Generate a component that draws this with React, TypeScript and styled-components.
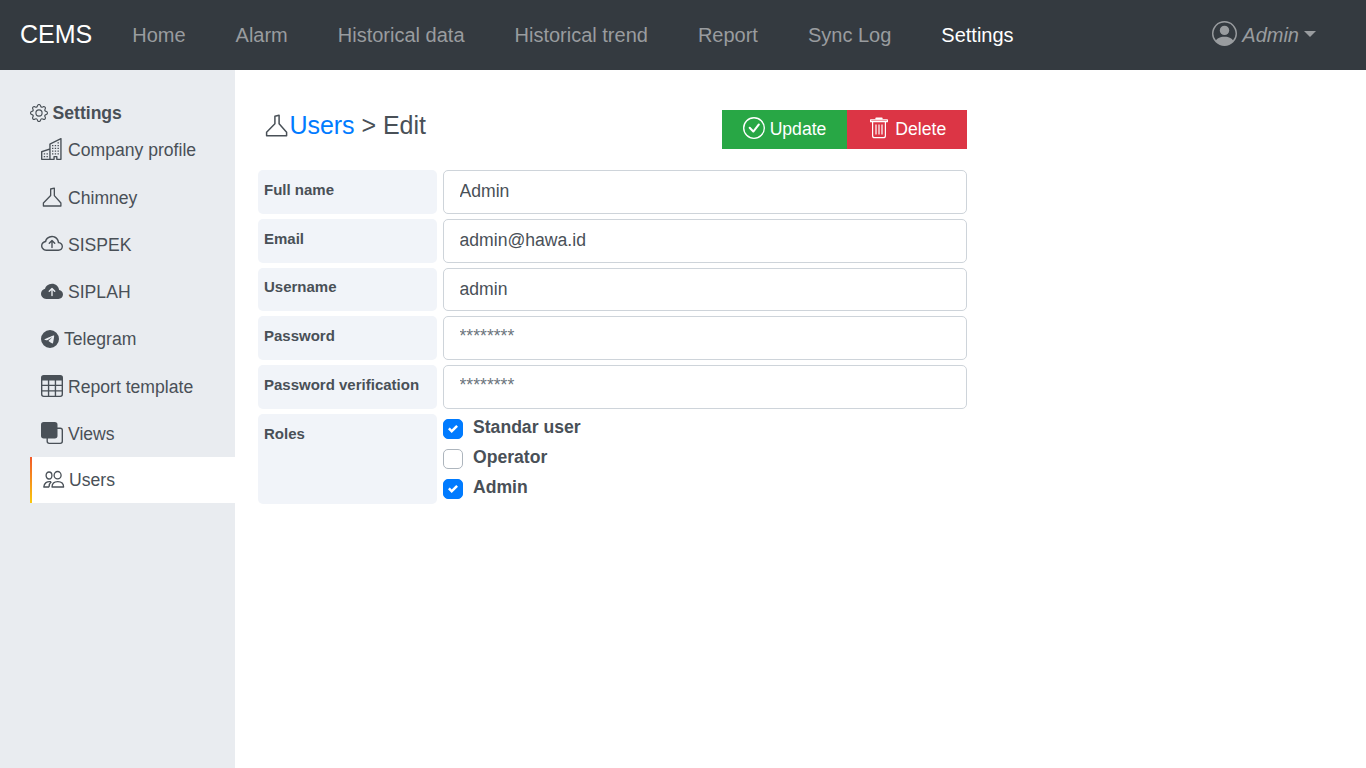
import React from "react";
import styled, { createGlobalStyle } from "styled-components";
import { BsPersonCircle, BsGear, BsBuildings, BsCloudArrowUp, BsCloudArrowUpFill, BsTelegram, BsTable, BsFront, BsCheckCircle } from "react-icons/bs";

const GlobalStyle = createGlobalStyle`
  *, *::before, *::after { box-sizing: border-box; }
  html, body { margin: 0; padding: 0; background: #fff; }
  body { font-family: "Liberation Sans", Arial, sans-serif; font-size: 17.6px; color: #495057; overflow: hidden; }
  svg { display: block; flex: none; }
`;

const Page = styled.div`
  display: flex;
  flex-direction: column;
  height: 768px;
`;

const Navbar = styled.nav`
  display: flex;
  align-items: center;
  flex: none;
  height: 70px;
  padding: 0 50px 0 20px;
  background: #343a40;
  font-size: 20px;
`;

const Brand = styled.span`
  width: 112.2px;
  font-size: 25px;
  line-height: 32px;
  margin-top: -2px;
  color: #fff;
`;

const NavLinks = styled.div`
  display: flex;
  gap: 50px;
  flex: 1;
`;

const NavLink = styled.a<{ $active?: boolean }>`
  line-height: 30px;
  color: ${(p) => (p.$active ? "#fff" : "#999c9f")};
`;

const Account = styled.div`
  display: flex;
  align-items: center;
  color: #999c9f;
  font-style: italic;
  line-height: 30px;
  svg { margin: -3px 5px 0 0; }
`;

const Caret = styled.span`
  margin: -2px 0 0 5px;
  border-top: 6px solid currentColor;
  border-left: 6px solid transparent;
  border-right: 6px solid transparent;
`;

const Body = styled.div`
  display: flex;
  flex: 1;
`;

const Sidebar = styled.aside`
  width: 235px;
  padding: 30px 0 0 30px;
  background: #e9ecf0;
`;

const SideTitle = styled.div`
  display: flex;
  align-items: center;
  gap: 4.5px;
  height: 26px;
  font-weight: bold;
`;

const SideItem = styled.a<{ $active?: boolean }>`
  display: flex;
  align-items: center;
  gap: 5px;
  height: ${(p) => (p.$active ? 46 : 47.3)}px;
  padding-left: 11px;
  ${(p) =>
    p.$active &&
    `background: linear-gradient(#f1592a, #f9c80e) left / 2px 100% no-repeat #fff;
     padding-left: 13px;
     gap: 4px;`}
`;

const IconSlot = styled.span<{ $lift?: number; $width?: number }>`
  display: flex;
  justify-content: flex-end;
  min-width: ${(p) => p.$width ?? 18}px;
  margin-bottom: ${(p) => (p.$lift ?? 0) * 2}px;
`;

const SideText = styled.span<{ $drop?: number }>`
  margin-top: ${(p) => p.$drop ?? 2}px;
`;

const Content = styled.main`
  width: 732px;
  padding: 40px 0 0 23px;
`;

const Header = styled.header`
  display: flex;
  justify-content: space-between;
  height: 60px;
`;

const Title = styled.h1`
  display: flex;
  align-items: center;
  height: 31px;
  margin: 0 0 0 7px;
  font-size: 25px;
  font-weight: normal;
  letter-spacing: -0.04px;
  white-space: pre;
`;

const TitleLink = styled.a`
  margin-left: 0.5px;
  color: #007bff;
`;

const Actions = styled.div`
  display: flex;
`;

const ActionButton = styled.button<{ $color: string; $width: number; $gap: number }>`
  display: flex;
  align-items: center;
  justify-content: center;
  gap: ${(p) => p.$gap}px;
  width: ${(p) => p.$width}px;
  height: 39px;
  padding: 0;
  border: 0;
  background: ${(p) => p.$color};
  color: #fff;
  font: 17.6px "Liberation Sans", Arial, sans-serif;
  svg { margin-bottom: 3px; }
`;

const DeleteButton = styled(ActionButton)`
  padding-left: 2px;
`;

const FormRow = styled.div<{ $tall?: boolean }>`
  display: flex;
  gap: 6px;
  height: ${(p) => (p.$tall ? 90 : 43.8)}px;
  margin-bottom: 5px;
`;

const Label = styled.label`
  width: 179px;
  padding: 9.8px 6px;
  border-radius: 5px;
  background: #f1f4f9;
  font-size: 15px;
  font-weight: bold;
  line-height: 20px;
`;

const Field = styled.input`
  flex: 1;
  min-width: 0;
  padding: 0 15.5px;
  border: 1px solid #ced4da;
  border-radius: 5px;
  background: #fff;
  color: #495057;
  font: 17.6px "Liberation Sans", Arial, sans-serif;
  &::placeholder { color: #6c757d; opacity: 1; }
  &:placeholder-shown { padding-bottom: 4px; }
`;

const Roles = styled.div`
  display: flex;
  flex-direction: column;
`;

const Role = styled.label`
  display: flex;
  gap: 10px;
  height: 30px;
  font-weight: bold;
  line-height: 26px;
`;

const Box = styled.span<{ $checked?: boolean }>`
  display: flex;
  align-items: center;
  justify-content: center;
  width: 20px;
  height: 20px;
  margin-top: 5px;
  border: 1px solid ${(p) => (p.$checked ? "#007bff" : "#adb5bd")};
  border-radius: 5px;
  background: ${(p) => (p.$checked ? "#007bff" : "#fff")};
`;

const Flask = ({ size }: { size: number }) => (
  <svg width={size} height={size} viewBox="0 0 24 24" fill="none" stroke="currentColor" strokeWidth="1.5" strokeLinejoin="round">
    <path d="M9.900 2.300 14.100 1.300v8.500l7.500 8.500v3.400H1.600v-3.400l8.300-8.500z" />
  </svg>
);

const Users = () => (
  <svg width="22" height="20" viewBox="0 0 22 20" fill="none" stroke="currentColor" strokeWidth="1.3" strokeLinejoin="round">
    <ellipse cx="6" cy="5.500" rx="2.900" ry="3.500" />
    <ellipse cx="14.600" cy="5.200" rx="3.500" ry="3.700" />
    <path d="M9 17c0-3.100 2-5.400 5.800-5.400s5.800 2.300 5.800 5.400zM8.200 11.700C4 10.900 1 13.200.8 17h5.400M6 17c0-2.400.7-4.100 2.400-5.300" />
  </svg>
);

const Trash = () => (
  <svg width="18" height="22" viewBox="0 0 18 22" fill="none" stroke="currentColor" strokeWidth="1.2" strokeLinejoin="round">
    <path d="M.6 2.900h16.800v1.800H.6zM2.600 5v13.700q0 2 2 2h8.800q2 0 2-2V5M6 7.500v10M9 7.500v10M12 7.500v10" />
    <path d="M6.300 1.600h5.400" strokeWidth="2" strokeLinecap="round" />
  </svg>
);

const Check = () => (
  <svg width="10" height="10" viewBox="0 0 8 8" fill="#fff">
    <path d="M6.564.75l-3.590 3.612-1.538-1.550L0 4.260 2.974 7.250 8 2.193z" />
  </svg>
);

const links = ["Home", "Alarm", "Historical data", "Historical trend", "Report", "Sync Log", "Settings"];

const sideItems = [
  { text: "Company profile", icon: <BsBuildings size={22} />, lift: 1 },
  { text: "Chimney", icon: <Flask size={21} />, width: 22, drop: 3, lift: -1 },
  { text: "SISPEK", icon: <BsCloudArrowUp size={22} /> },
  { text: "SIPLAH", icon: <BsCloudArrowUpFill size={22} /> },
  { text: "Telegram", icon: <BsTelegram size={18} /> },
  { text: "Report template", icon: <BsTable size={22} /> },
  { text: "Views", icon: <BsFront size={22} />, lift: 0.5 },
];

const fields = [
  { label: "Full name", value: "Admin" },
  { label: "Email", value: "admin@hawa.id" },
  { label: "Username", value: "admin" },
  { label: "Password", placeholder: "********" },
  { label: "Password verification", placeholder: "********" },
];

const roles = [
  { name: "Standar user", checked: true },
  { name: "Operator", checked: false },
  { name: "Admin", checked: true },
];

export default function App() {
  return (
    <Page>
      <GlobalStyle />
      <Navbar>
        <Brand>CEMS</Brand>
        <NavLinks>
          {links.map((l) => (
            <NavLink key={l} $active={l === "Settings"}>{l}</NavLink>
          ))}
        </NavLinks>
        <Account>
          <BsPersonCircle size={25} />
          Admin
          <Caret />
        </Account>
      </Navbar>
      <Body>
        <Sidebar>
          <SideTitle><BsGear size={18} />Settings</SideTitle>
          {sideItems.map((s) => (
            <SideItem key={s.text}>
              <IconSlot $lift={s.lift} $width={s.width}>{s.icon}</IconSlot>
              <SideText $drop={s.drop}>{s.text}</SideText>
            </SideItem>
          ))}
          <SideItem $active>
            <Users />
            <SideText $drop={0}>Users</SideText>
          </SideItem>
        </Sidebar>
        <Content>
          <Header>
            <Title>
              <Flask size={24} />
              <TitleLink>Users</TitleLink> &gt; Edit
            </Title>
            <Actions>
              <ActionButton $color="#28a745" $width={125} $gap={5}>
                <BsCheckCircle size={22} />
                Update
              </ActionButton>
              <DeleteButton $color="#dc3545" $width={120} $gap={7.5}>
                <Trash />
                Delete
              </DeleteButton>
            </Actions>
          </Header>
          {fields.map((f) => (
            <FormRow key={f.label}>
              <Label>{f.label}</Label>
              <Field defaultValue={f.value} placeholder={f.placeholder} />
            </FormRow>
          ))}
          <FormRow $tall>
            <Label as="div">Roles</Label>
            <Roles>
              {roles.map((r) => (
                <Role key={r.name}>
                  <Box $checked={r.checked}>{r.checked && <Check />}</Box>
                  {r.name}
                </Role>
              ))}
            </Roles>
          </FormRow>
        </Content>
      </Body>
    </Page>
  );
}
